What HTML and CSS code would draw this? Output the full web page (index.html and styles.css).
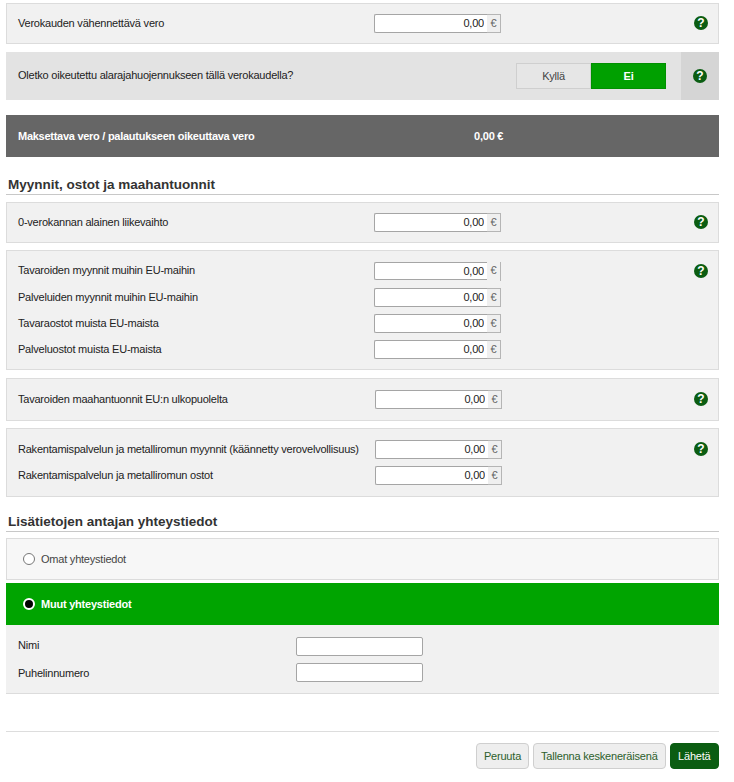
FILE: index.html
```html
<!DOCTYPE html>
<html lang="fi">
<head>
<meta charset="utf-8">
<title>Veroilmoitus</title>
<link rel="stylesheet" href="styles.css">
</head>
<body>
<main class="page">
  <section class="panel p-single">
    <div class="rows">
      <div class="row"><span class="label">Verokauden vähennettävä vero</span><span class="money"><input class="amount" type="text" value="0,00"><span class="unit">€</span></span></div>
    </div>
    <span class="help">?</span>
  </section>

  <section class="question">
    <span class="q-text">Oletko oikeutettu alarajahuojennukseen tällä verokaudella?</span>
    <div class="toggle"><span class="opt">Kyllä</span><span class="opt on">Ei</span></div>
    <div class="q-help"><span class="help">?</span></div>
  </section>

  <section class="total">
    <span class="total-label">Maksettava vero / palautukseen oikeuttava vero</span>
    <span class="total-value">0,00 €</span>
  </section>

  <h2 class="heading h-first">Myynnit, ostot ja maahantuonnit</h2>

  <section class="panel p-single">
    <div class="rows">
      <div class="row"><span class="label">0-verokannan alainen liikevaihto</span><span class="money"><input class="amount" type="text" value="0,00"><span class="unit">€</span></span></div>
    </div>
    <span class="help">?</span>
  </section>

  <section class="panel p-multi p-sales">
    <div class="rows">
      <div class="row"><span class="label label-high">Tavaroiden myynnit muihin EU-maihin</span><span class="money broken"><input class="amount" type="text" value="0,00"><span class="unit">€</span></span></div>
      <div class="row"><span class="label">Palveluiden myynnit muihin EU-maihin</span><span class="money"><input class="amount" type="text" value="0,00"><span class="unit">€</span></span></div>
      <div class="row"><span class="label">Tavaraostot muista EU-maista</span><span class="money"><input class="amount" type="text" value="0,00"><span class="unit">€</span></span></div>
      <div class="row"><span class="label">Palveluostot muista EU-maista</span><span class="money"><input class="amount" type="text" value="0,00"><span class="unit">€</span></span></div>
    </div>
    <span class="help">?</span>
  </section>

  <section class="panel p-import shifted">
    <div class="rows">
      <div class="row"><span class="label">Tavaroiden maahantuonnit EU:n ulkopuolelta</span><span class="money"><input class="amount" type="text" value="0,00"><span class="unit">€</span></span></div>
    </div>
    <span class="help">?</span>
  </section>

  <section class="panel p-build shifted">
    <div class="rows">
      <div class="row"><span class="label">Rakentamispalvelun ja metalliromun myynnit (käännetty verovelvollisuus)</span><span class="money"><input class="amount" type="text" value="0,00"><span class="unit">€</span></span></div>
      <div class="row"><span class="label">Rakentamispalvelun ja metalliromun ostot</span><span class="money"><input class="amount" type="text" value="0,00"><span class="unit">€</span></span></div>
    </div>
    <span class="help">?</span>
  </section>

  <h2 class="heading h-second">Lisätietojen antajan yhteystiedot</h2>

  <div class="choice"><span class="radio"></span><span>Omat yhteystiedot</span></div>
  <div class="choice selected"><span class="radio checked"></span><span>Muut yhteystiedot</span></div>
  <section class="contact">
    <div class="contact-row"><span class="contact-label label-high">Nimi</span><input class="plain" type="text"></div>
    <div class="contact-row"><span class="contact-label">Puhelinnumero</span><input class="plain" type="text"></div>
  </section>

  <footer class="actions">
    <button class="btn" type="button">Peruuta</button>
    <button class="btn btn-wide" type="button">Tallenna keskeneräisenä</button>
    <button class="btn primary" type="button">Lähetä</button>
  </footer>
</main>
</body>
</html>
```

FILE: styles.css
```css
* { box-sizing: border-box; }
html, body { margin: 0; padding: 0; background: #fff; }
body { font-family: "Liberation Sans", Arial, sans-serif; font-size: 11px; letter-spacing: -0.22px; color: #222; }
.page { width: 713px; margin-left: 6px; padding-top: 3px; }

.panel {
  display: flex;
  align-items: flex-start;
  background: #f1f1f1;
  border: 1px solid #dcdcdc;
  margin-bottom: 7px;
  padding-left: 11px;
  padding-right: 10px;
}
.p-single { padding-top: 10px; padding-bottom: 10px; }
.p-multi { padding-top: 11px; padding-bottom: 10px; }
.p-sales { margin-bottom: 8px; }
.p-import { padding-top: 11px; padding-bottom: 11px; }
.p-build { padding-top: 11px; padding-bottom: 11px; }

.rows { display: flex; flex-direction: column; gap: 7px; flex: 1; }
.row { display: flex; align-items: center; height: 19px; }
.label { width: 356px; flex: none; white-space: nowrap; padding-bottom: 2px; }
.label-high { padding-bottom: 4px; }
.shifted .label { width: 357px; }

.money { display: flex; width: 127px; height: 19px; flex: none; }
.amount {
  width: 113px;
  height: 19px;
  padding: 0 3px 1px 0;
  text-align: right;
  font: 11px "Liberation Sans", Arial, sans-serif;
  letter-spacing: -0.2px;
  color: #222;
  background: #fff;
  border: 1px solid #a5a5a5;
  border-right: 0;
  border-radius: 2px 0 0 2px;
  outline: 0;
}
.unit {
  width: 14px;
  height: 19px;
  line-height: 17px;
  text-align: center;
  color: #666;
  background: #efefef;
  border: 1px solid #b5b5b5;
  border-left: 0;
}
.broken .unit { border-top: 0; border-bottom: 0; background: transparent; }
.broken .amount { height: 18px; }

.help {
  width: 14px;
  height: 14px;
  flex: none;
  margin-top: 2px;
  border-radius: 50%;
  background: #0b5d12;
  color: #fff;
  font-size: 12px;
  font-weight: 700;
  letter-spacing: 0;
  line-height: 14px;
  text-align: center;
}

.question {
  display: flex;
  align-items: stretch;
  height: 48px;
  margin-top: 8px;
  margin-bottom: 15px;
  background: #e3e3e3;
}
.q-text { width: 510px; flex: none; padding-left: 12px; line-height: 46px; }
.toggle { display: flex; width: 150px; height: 26px; margin-top: 11px; flex: none; }
.opt {
  width: 75px;
  line-height: 24px;
  text-align: center;
  color: #444;
  background: #e6e6e6;
  border: 1px solid #cfcfcf;
}
.opt.on {
  color: #fff;
  font-weight: 700;
  background: #00a000;
  border-color: #009000;
}
.q-help {
  width: 38px;
  margin-left: 15px;
  background: #d5d5d5;
  display: flex;
  align-items: center;
  justify-content: center;
}
.q-help .help { margin-top: 0; }

.total {
  display: flex;
  align-items: center;
  height: 42px;
  background: #666;
  color: #fff;
  font-weight: 700;
}
.total-label { width: 468px; padding-left: 12px; flex: none; letter-spacing: -0.27px; }

.heading {
  margin: 0;
  font-size: 13.5px;
  letter-spacing: 0;
  font-weight: 700;
  color: #333;
  border-bottom: 1px solid #c8c8c8;
  padding-left: 2px;
}
.h-first { margin-top: 19px; margin-bottom: 7px; height: 19px; line-height: 17px; }
.h-second { margin-top: 17px; margin-bottom: 6px; height: 18px; line-height: 16px; }

.choice {
  display: flex;
  align-items: center;
  gap: 6px;
  height: 42px;
  margin-bottom: 3px;
  padding-left: 16px;
  color: #444;
  background: #f7f7f7;
  border: 1px solid #dcdcdc;
}
.choice.selected {
  margin-bottom: 0;
  color: #fff;
  font-weight: 700;
  background: #00a400;
  border: 0;
  padding-left: 17px;
}
.radio {
  width: 12px;
  height: 12px;
  border: 1px solid #777;
  border-radius: 50%;
  background: #fff;
}
.radio.checked {
  background: #000;
  border: 2px solid #fff;
}

.contact {
  height: 69px;
  padding: 12px 0 0 12px;
  background: #f1f1f1;
  border-bottom: 1px solid #dcdcdc;
  display: flex;
  flex-direction: column;
  gap: 7px;
}
.contact-row { display: flex; align-items: center; height: 19px; }
.contact-label { width: 278px; flex: none; }
.plain {
  width: 127px;
  height: 19px;
  padding: 0 2px;
  background: #fff;
  border: 1px solid #a5a5a5;
  border-radius: 2px;
  outline: 0;
}

.actions {
  display: flex;
  justify-content: flex-end;
  gap: 4px;
  margin-top: 37px;
  padding-top: 11px;
  border-top: 1px solid #ddd;
}
.btn {
  height: 26px;
  padding: 0 7px;
  font: 11px "Liberation Sans", Arial, sans-serif;
  letter-spacing: -0.2px;
  color: #2c5e2c;
  background: #eee;
  border: 1px solid #cfcfcf;
  border-radius: 4px;
}
.btn.primary {
  padding: 0 7.5px;
  color: #fff;
  background: #0b5d12;
  border-color: #0b5d12;
}
```
